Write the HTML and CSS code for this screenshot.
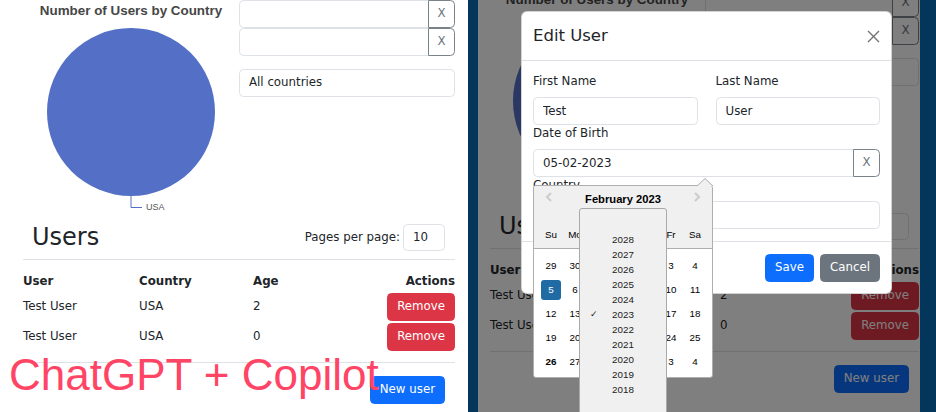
FILE: index.html
```html
<!DOCTYPE html>
<html lang="en">
<head>
<meta charset="utf-8">
<title>Users</title>
<link rel="stylesheet" href="styles.css">
</head>
<body>
<div class="stage">
  <section class="shot shot-left">
    <div class="page">
      <div class="top">
        <div class="chart">
          <svg class="pie" width="216" height="214" viewBox="0 0 216 214">
            <text x="108" y="15" class="chart-title" text-anchor="middle">Number of Users by Country</text>
            <circle cx="108" cy="112" r="84" fill="#5470c6"/>
            <path d="M108 196 V207.5 H119" fill="none" stroke="#5470c6" stroke-width="1"/>
            <text x="123" y="210" class="chart-label">USA</text>
          </svg>
        </div>
        <div class="filters">
          <div class="input-group"><input class="form-control" type="text" value=""><button class="btn-x">X</button></div>
          <div class="input-group"><input class="form-control" type="text" value=""><button class="btn-x">X</button></div>
          <div class="form-control select">All countries</div>
        </div>
      </div>
      <div class="users-head">
        <h2>Users</h2>
        <div class="per-page">Pages per page:<span class="form-control per-page-input">10</span></div>
      </div>
      <hr class="rule">
      <table class="users">
        <colgroup><col class="c-user"><col class="c-country"><col class="c-age"><col></colgroup>
        <thead><tr><th>User</th><th>Country</th><th>Age</th><th class="right">Actions</th></tr></thead>
        <tbody>
          <tr><td>Test User</td><td>USA</td><td>2</td><td class="right"><button class="btn btn-danger">Remove</button></td></tr>
          <tr><td>Test User</td><td>USA</td><td>0</td><td class="right"><button class="btn btn-danger">Remove</button></td></tr>
        </tbody>
      </table>
      <hr class="rule rule-bottom">
      <div class="actions"><button class="btn btn-primary">New user</button></div>
    </div>
    <div class="meme">ChatGPT + Copilot</div>
  </section>

  <section class="shot shot-right">
    <div class="page page-dim">
      <div class="top">
        <div class="chart">
          <svg class="pie" width="214" height="214" viewBox="0 0 214 214">
            <text x="107" y="15" class="chart-title" text-anchor="middle">Number of Users by Country</text>
            <circle cx="107" cy="112" r="84" fill="#5470c6"/>
            <path d="M107 196 V207.5 H118" fill="none" stroke="#5470c6" stroke-width="1"/>
            <text x="122" y="210" class="chart-label">USA</text>
          </svg>
        </div>
        <div class="filters">
          <div class="input-group"><input class="form-control" type="text" value=""><button class="btn-x">X</button></div>
          <div class="input-group"><input class="form-control" type="text" value=""><button class="btn-x">X</button></div>
          <div class="form-control select">All countries</div>
        </div>
      </div>
      <div class="users-head">
        <h2>Users</h2>
        <div class="per-page">Pages per page:<span class="form-control per-page-input">10</span></div>
      </div>
      <hr class="rule">
      <table class="users">
        <colgroup><col class="c-user"><col class="c-country"><col class="c-age"><col></colgroup>
        <thead><tr><th>User</th><th>Country</th><th>Age</th><th class="right">Actions</th></tr></thead>
        <tbody>
          <tr><td>Test User</td><td>USA</td><td>2</td><td class="right"><button class="btn btn-danger">Remove</button></td></tr>
          <tr><td>Test User</td><td>USA</td><td>0</td><td class="right"><button class="btn btn-danger">Remove</button></td></tr>
        </tbody>
      </table>
      <hr class="rule rule-bottom">
      <div class="actions"><button class="btn btn-primary">New user</button></div>
    </div>
    <div class="backdrop"></div>

    <div class="modal">
      <div class="modal-header">
        <h4 class="modal-title">Edit User</h4>
        <svg class="close" width="13" height="13" viewBox="0 0 13 13"><path d="M1 1 L12 12 M12 1 L1 12" stroke="#000" stroke-width="1.4" fill="none"/></svg>
      </div>
      <div class="modal-body">
        <div class="two-col">
          <div>
            <label class="form-label">First Name</label>
            <input class="form-control" type="text" value="Test">
          </div>
          <div>
            <label class="form-label">Last Name</label>
            <input class="form-control" type="text" value="User">
          </div>
        </div>
        <label class="form-label tight">Date of Birth</label>
        <div class="input-group">
          <input class="form-control" type="text" value="05-02-2023">
          <button class="btn-x">X</button>
        </div>
        <label class="form-label tight">Country</label>
        <div class="form-control select-plain"></div>
      </div>
      <div class="modal-footer">
        <button class="btn btn-primary">Save</button>
        <button class="btn btn-secondary">Cancel</button>
      </div>

      <div class="datepicker">
        <svg class="dp-triangle" width="16" height="8" viewBox="0 0 16 8"><polygon points="0,8 8,0.5 16,8" fill="#f0f0f0"/><polyline points="0,8 8,0.5 16,8" fill="none" stroke="#aeaeae" stroke-width="1"/></svg>
        <div class="dp-header">
          <svg class="dp-nav dp-prev" width="8" height="10" viewBox="0 0 8 10"><polyline points="6,1 2,5 6,9" fill="none" stroke="#ccc" stroke-width="2"/></svg>
          <svg class="dp-nav dp-next" width="8" height="10" viewBox="0 0 8 10"><polyline points="2,1 6,5 2,9" fill="none" stroke="#ccc" stroke-width="2"/></svg>
          <div class="dp-title">February 2023</div>
          <div class="dp-dropdown"></div>
          <div class="dp-names"><span>Su</span><span>Mo</span><span>Tu</span><span>We</span><span>Th</span><span>Fr</span><span>Sa</span></div>
        </div>
        <div class="dp-month">
          <div class="dp-week"><span>29</span><span>30</span><span>31</span><span>1</span><span>2</span><span>3</span><span>4</span></div>
          <div class="dp-week"><span class="sel">5</span><span>6</span><span>7</span><span>8</span><span>9</span><span>10</span><span>11</span></div>
          <div class="dp-week"><span>12</span><span>13</span><span>14</span><span>15</span><span>16</span><span>17</span><span>18</span></div>
          <div class="dp-week"><span>19</span><span>20</span><span>21</span><span>22</span><span>23</span><span>24</span><span>25</span></div>
          <div class="dp-week"><span class="today">26</span><span>27</span><span>28</span><span>1</span><span>2</span><span>3</span><span>4</span></div>
        </div>
        <ul class="year-list">
          <li>2028</li><li>2027</li><li>2026</li><li>2025</li><li>2024</li>
          <li class="checked"><span class="check">✓</span>2023</li>
          <li>2022</li><li>2021</li><li>2020</li><li>2019</li><li>2018</li>
        </ul>
      </div>
    </div>
  </section>
</div>
</body>
</html>
```

FILE: styles.css
```css
* { box-sizing: border-box; }
html, body { margin: 0; padding: 0; }
body {
  width: 936px;
  height: 412px;
  overflow: hidden;
  background: #04355b;
  font-family: "DejaVu Sans", sans-serif;
  font-size: 11.8px;
  line-height: 1.5;
  color: #212529;
}
.stage { display: flex; gap: 10px; height: 412px; }
.shot { position: relative; flex: none; height: 412px; overflow: hidden; background: #fff; }
.shot-left { width: 468px; }
.shot-right { width: 442px; }

.page { width: 432px; margin-left: 23px; }
.page-dim { width: 429px; margin: -11px 0 0 12px; }

.top { display: grid; grid-template-columns: 1fr 1fr; height: 216px; }
.pie { display: block; margin: 0 auto; }
.chart-title { font-family: "Liberation Sans", Arial, sans-serif; font-weight: bold; font-size: 13.4px; fill: #464646; }
.chart-label { font-family: "Liberation Sans", Arial, sans-serif; font-size: 9px; fill: #555; }

.filters { display: flex; flex-direction: column; }
.input-group { display: flex; height: 28px; }
.input-group .form-control { flex: 1; min-width: 0; border-radius: 4.5px 0 0 4.5px; }
.btn-x {
  flex: none;
  width: 27px;
  height: 28px;
  margin-left: -1px;
  padding: 0;
  border: 1px solid #7b838a;
  border-radius: 0 4.5px 4.5px 0;
  background: #fff;
  color: #6c757d;
  font: inherit;
}
.form-control {
  display: flex;
  align-items: center;
  height: 28px;
  padding: 0 9px;
  border: 1px solid #dee2e6;
  border-radius: 4.5px;
  background: #fff;
  color: #212529;
  font: inherit;
  outline: none;
}
input.form-control { display: block; width: 100%; }
.select { margin-top: 13px; }

.users-head {
  display: flex;
  align-items: center;
  justify-content: space-between;
  height: 27px;
  margin-top: 8px;
  padding: 0 10px 0 9px;
}
.users-head h2 { margin: 0; font-size: 24px; font-weight: 400; line-height: 1.2; }
.per-page { display: flex; align-items: center; gap: 3px; }
.per-page-input { width: 42px; height: 27px; }

.rule { margin: 8px 0 0; border: 0; border-top: 1px solid #dee2e6; height: 0; }
.rule-bottom { margin-top: 10px; }

.users { width: 100%; margin-top: 12px; border-collapse: collapse; table-layout: fixed; }
.c-user { width: 116px; }
.c-country { width: 114px; }
.c-age { width: 100px; }
.users th { height: 20px; padding: 0; text-align: left; font-weight: bold; }
.users td { height: 30px; padding: 0; }
.users .right { text-align: right; }

.btn {
  height: 28px;
  padding: 0 9px;
  border: 1px solid transparent;
  border-radius: 4.5px;
  color: #fff;
  font: inherit;
  vertical-align: middle;
}
.btn-danger { background: #dc3545; border-color: #dc3545; }
.btn-primary { background: #0d6efd; border-color: #0d6efd; }
.btn-secondary { background: #6c757d; border-color: #6c757d; }
.actions { display: flex; justify-content: flex-end; margin-top: 13px; padding-right: 10px; }

.meme {
  position: absolute;
  left: 9px;
  top: 353px;
  font-family: "Liberation Sans", Arial, sans-serif;
  font-size: 44px;
  line-height: 44px;
  color: #ff4566;
  white-space: nowrap;
}

.backdrop { position: absolute; inset: 0; background: rgba(0, 0, 0, 0.5); }

.modal {
  position: absolute;
  top: 11px;
  left: 43px;
  width: 371px;
  background: #fff;
  border: 1px solid rgba(0, 0, 0, 0.175);
  border-radius: 6px;
}
.modal-header {
  display: flex;
  align-items: center;
  justify-content: space-between;
  height: 49px;
  padding: 0 11px;
  border-bottom: 1px solid #dee2e6;
}
.modal-title { margin: 0; font-size: 16.5px; font-weight: 400; line-height: 1.2; }
.close { opacity: 0.55; margin-right: 0; }
.modal-body { padding: 12px 11px; }
.two-col { display: grid; grid-template-columns: 1fr 1fr; gap: 18px; }
.form-label { display: block; line-height: 17px; margin-bottom: 7px; }
.select-plain { width: 100%; }
.modal-footer {
  display: flex;
  justify-content: flex-end;
  gap: 6px;
  padding: 12px 11px 11px;
  border-top: 1px solid #dee2e6;
}

.datepicker {
  position: absolute;
  top: 173px;
  left: 11px;
  width: 180px;
  border: 1px solid #aeaeae;
  border-radius: 3px;
  background: #fff;
  font-family: "Liberation Sans", Arial, sans-serif;
  font-size: 9.8px;
  color: #000;
}
.dp-triangle { position: absolute; top: -8px; left: 163px; display: block; }
.dp-header {
  position: relative;
  height: 63px;
  padding-top: 6px;
  background: #f0f0f0;
  border-bottom: 1px solid #aeaeae;
  border-radius: 3px 3px 0 0;
}
.dp-nav { position: absolute; top: 6px; display: block; }
.dp-prev { left: 11px; }
.dp-next { left: 159px; }
.dp-title { text-align: center; font-weight: bold; font-size: 11.2px; line-height: 14px; color: #000; }
.dp-dropdown { height: 20px; }
.dp-names { display: flex; padding: 0 5px; }
.dp-names span, .dp-week span {
  width: 20px;
  margin: 0 2px;
  text-align: center;
}
.dp-names span { line-height: 18px; }
.dp-month { padding: 5px 5px 3px; }
.dp-week { display: flex; }
.dp-week span { height: 20px; margin: 2px; line-height: 20px; border-radius: 3px; }
.dp-week .sel { background: #216ba5; color: #fff; }
.dp-week .today { font-weight: bold; }

.year-list {
  position: absolute;
  top: 22px;
  left: 45px;
  width: 88px;
  height: 220px;
  margin: 0;
  padding: 23px 0 0;
  list-style: none;
  background: #f0f0f0;
  border: 1px solid #a9a9a9;
  border-radius: 3px;
  font-size: 9.8px;
  color: #222;
}
.year-list li { position: relative; height: 15px; line-height: 15px; text-align: center; }
.check { position: absolute; left: 10px; top: 0; font-family: "DejaVu Sans", sans-serif; font-size: 9px; }
```
